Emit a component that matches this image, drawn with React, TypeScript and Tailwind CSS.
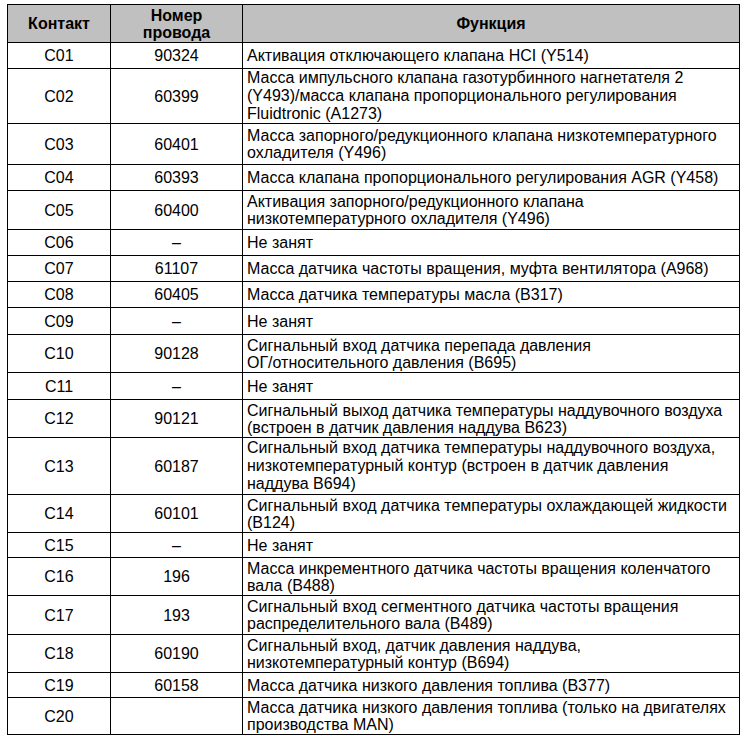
const rows: [string, string, string[], number][] = [
  ["C01", "90324", ["Активация отключающего клапана HCI (Y514)"], 26],
  [
    "C02",
    "60399",
    [
      "Масса импульсного клапана газотурбинного нагнетателя 2",
      "(Y493)/масса клапана пропорционального регулирования",
      "Fluidtronic (A1273)",
    ],
    53,
  ],
  ["C03", "60401", ["Масса запорного/редукционного клапана низкотемпературного", "охладителя (Y496)"], 41],
  ["C04", "60393", ["Масса клапана пропорционального регулирования AGR (Y458)"], 26],
  ["C05", "60400", ["Активация запорного/редукционного клапана", "низкотемпературного охладителя (Y496)"], 39],
  ["C06", "–", ["Не занят"], 26],
  ["C07", "61107", ["Масса датчика частоты вращения, муфта вентилятора (A968)"], 26],
  ["C08", "60405", ["Масса датчика температуры масла (B317)"], 26],
  ["C09", "–", ["Не занят"], 27],
  ["C10", "90128", ["Сигнальный вход датчика перепада давления", "ОГ/относительного давления (B695)"], 38],
  ["C11", "–", ["Не занят"], 27],
  ["C12", "90121", ["Сигнальный выход датчика температуры наддувочного воздуха", "(встроен в датчик давления наддува B623)"], 38],
  [
    "C13",
    "60187",
    [
      "Сигнальный вход датчика температуры наддувочного воздуха,",
      "низкотемпературный контур (встроен в датчик давления",
      "наддува B694)",
    ],
    57,
  ],
  ["C14", "60101", ["Сигнальный вход датчика температуры охлаждающей жидкости", "(B124)"], 38],
  ["C15", "–", ["Не занят"], 25],
  ["C16", "196", ["Масса инкрементного датчика частоты вращения коленчатого", "вала (B488)"], 38],
  ["C17", "193", ["Сигнальный вход сегментного датчика частоты вращения", "распределительного вала (B489)"], 39],
  ["C18", "60190", ["Сигнальный вход, датчик давления наддува,", "низкотемпературный контур (B694)"], 38],
  ["C19", "60158", ["Масса датчика низкого давления топлива (B377)"], 25],
  ["C20", "", ["Масса датчика низкого давления топлива (только на двигателях", "производства MAN)"], 37],
];

export default function App() {
  return (
    <div className="min-h-[741px] w-[746px] bg-white pl-[7px] pt-[4px] font-['Liberation_Sans',Arial,sans-serif] text-[16px] text-black">
      <table className="w-[733px] table-fixed border-collapse">
        <colgroup>
          <col className="w-[103px]" />
          <col className="w-[132px]" />
          <col />
        </colgroup>
        <thead>
          <tr className="h-[38px] bg-[#c0c0c0] font-bold leading-[17px]">
            <th className="border border-black">Контакт</th>
            <th className="border border-black">
              Номер
              <br />
              провода
            </th>
            <th className="border border-black">Функция</th>
          </tr>
        </thead>
        <tbody>
          {rows.map(([pin, wire, fn, h]) => (
            <tr key={pin} style={{ height: h }} className="leading-[17px]">
              <td className="border border-black p-0 text-center">{pin}</td>
              <td className="border border-black p-0 text-center">{wire}</td>
              <td className="whitespace-nowrap border border-black px-[4px] py-0">
                {fn.map((line, i) => (
                  <div key={i} className={fn.length === 3 ? "leading-[18px]" : ""}>
                    {line}
                  </div>
                ))}
              </td>
            </tr>
          ))}
        </tbody>
      </table>
    </div>
  );
}
